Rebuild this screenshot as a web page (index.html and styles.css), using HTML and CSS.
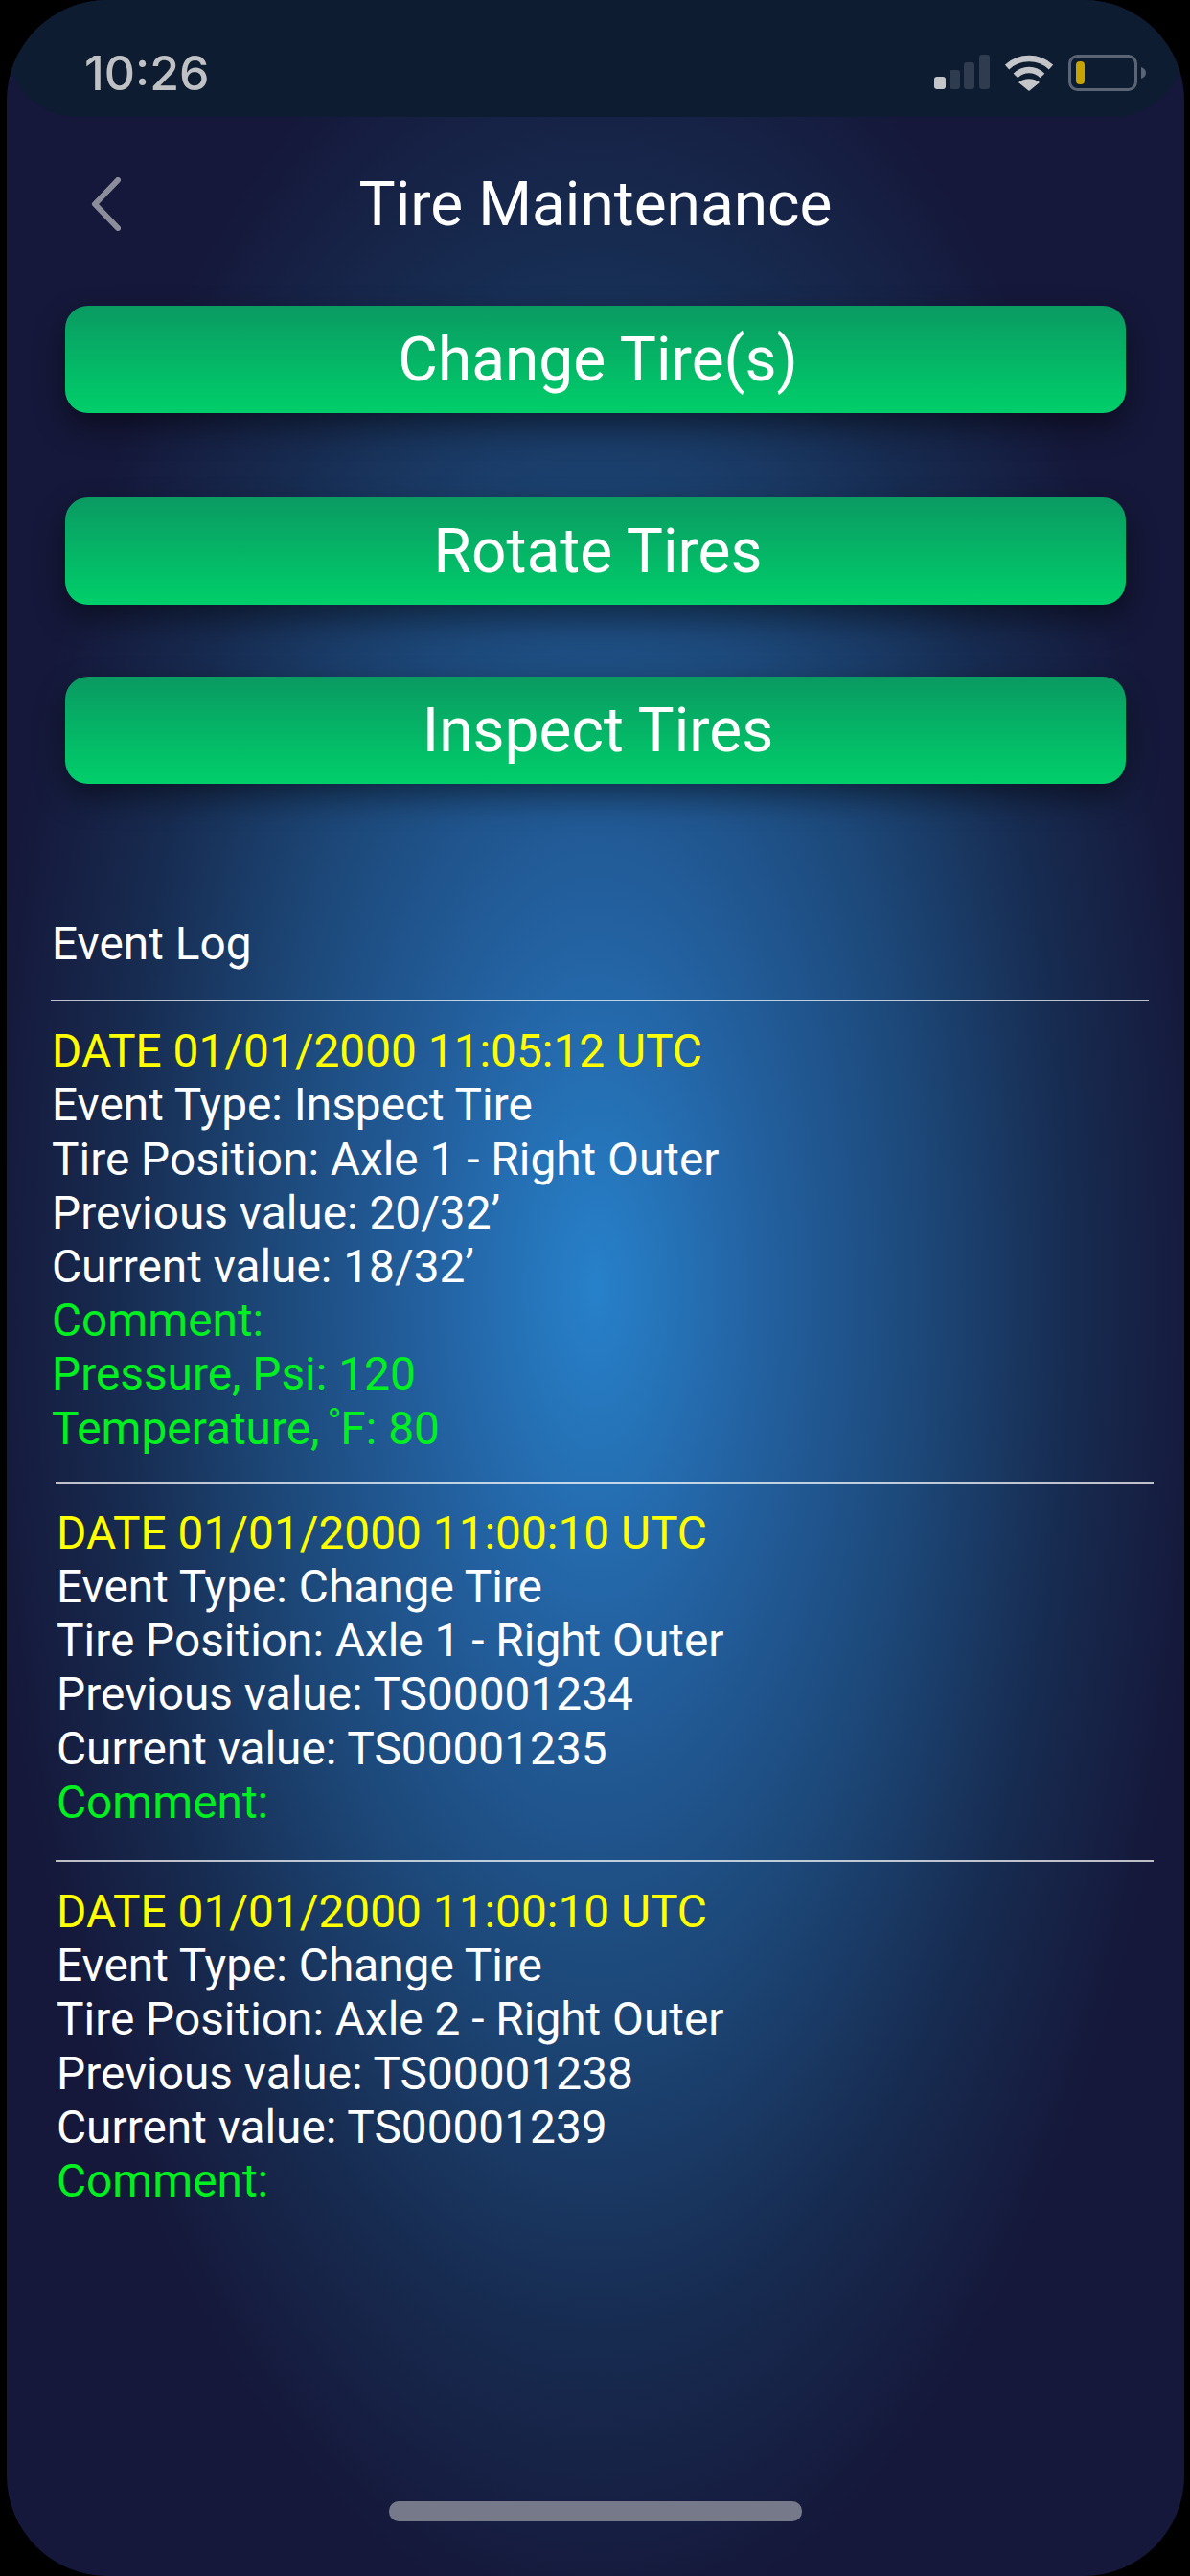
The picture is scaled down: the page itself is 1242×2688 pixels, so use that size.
FILE: index.html
```html
<!DOCTYPE html>
<html>
<head>
    <title>Tire Maintenance</title>
    <meta charset="UTF-8">
    <link rel="stylesheet" href="styles.css">
</head>
<body>
    <div class="phone">
        <!-- Status bar -->
        <div class="status-bar">
            <span class="status-time">10:26</span>
            <div class="status-icons">
                <svg width="58" height="36" viewBox="0 0 58 36">
                    <rect x="0" y="23" width="12" height="13" rx="3" fill="#c4c5c8"/>
                    <rect x="16" y="16" width="11" height="20" rx="3" fill="#2f3c50"/>
                    <rect x="31" y="8" width="11" height="28" rx="3" fill="#2f3c50"/>
                    <rect x="47" y="0" width="11" height="36" rx="3" fill="#2f3c50"/>
                </svg>
                <svg width="50" height="38" viewBox="0 0 50 38">
                    <path d="M2 13 C15 1 35 1 48 13" fill="none" stroke="#c4c5c8" stroke-width="6.5"/>
                    <path d="M11 22 C19 14 31 14 39 22" fill="none" stroke="#c4c5c8" stroke-width="6.5"/>
                    <path d="M25 38 L14 29 C20 24 30 24 36 29 Z" fill="#c4c5c8"/>
                </svg>
                <svg width="81" height="38" viewBox="0 0 81 38">
                    <rect x="1.5" y="1.5" width="69" height="35" rx="8" fill="none" stroke="#5a6474" stroke-width="3"/>
                    <rect x="8" y="7" width="9" height="24" rx="4" fill="#c8a402"/>
                    <path d="M76 13 C79 14 81 16 81 19 C81 22 79 24 76 25 Z" fill="#5a6474"/>
                </svg>
            </div>
        </div>

        <!-- Title -->
        <div class="top-nav">
            <svg class="back-icon" width="32" height="56" viewBox="0 0 32 56">
                <path d="M29 3 L5 28 L29 53" fill="none" stroke="#8b8d9b" stroke-width="6" stroke-linecap="round" stroke-linejoin="round"/>
            </svg>
            <h1 class="page-title">Tire Maintenance</h1>
        </div>

        <!-- Actions -->
        <div class="actions">
            <button class="action-button">Change Tire(s)</button>
            <button class="action-button">Rotate Tires</button>
            <button class="action-button">Inspect Tires</button>
        </div>

        <!-- Event log -->
        <div class="event-log">
            <div class="log-title">Event Log</div>
            <div class="log-entry">
                <div class="log-date">DATE 01/01/2000 11:05:12 UTC</div>
                <div>Event Type: Inspect Tire</div>
                <div>Tire Position: Axle 1 - Right Outer</div>
                <div>Previous value: 20/32’</div>
                <div>Current value: 18/32’</div>
                <div class="log-note">Comment:</div>
                <div class="log-note">Pressure, Psi: 120</div>
                <div class="log-note">Temperature, <span class="degree">˚</span>F: 80</div>
            </div>
            <div class="log-entry shifted">
                <div class="log-date">DATE 01/01/2000 11:00:10 UTC</div>
                <div>Event Type: Change Tire</div>
                <div>Tire Position: Axle 1 - Right Outer</div>
                <div>Previous value: TS00001234</div>
                <div>Current value: TS00001235</div>
                <div class="log-note">Comment:</div>
            </div>
            <div class="log-entry shifted">
                <div class="log-date">DATE 01/01/2000 11:00:10 UTC</div>
                <div>Event Type: Change Tire</div>
                <div>Tire Position: Axle 2 - Right Outer</div>
                <div>Previous value: TS00001238</div>
                <div>Current value: TS00001239</div>
                <div class="log-note">Comment:</div>
            </div>
        </div>

        <div class="home-bar"></div>
    </div>
</body>
</html>
```

FILE: styles.css
```css
html, body {
    margin: 0;
    padding: 0;
    background: #000;
}
body {
    width: 1242px;
    height: 2688px;
    overflow: hidden;
    font-family: Roboto, "Liberation Sans", sans-serif;
}
.phone {
    width: 1229px;
    height: 2688px;
    margin: 0 6px 0 7px;
    box-sizing: border-box;
    border-radius: 105px;
    overflow: hidden;
    display: flex;
    flex-direction: column;
    color: #fff;
    background: radial-gradient(ellipse 640px 1400px at 50% 50%, #2781ca 0%, #23609f 28%, #1c4676 55%, #172b50 78%, #15183a 100%);
}
.status-bar {
    height: 122px;
    flex: none;
    box-sizing: border-box;
    padding: 51px 40px 0 81px;
    display: flex;
    justify-content: space-between;
    align-items: flex-start;
    background: #0d1c30;
    border-radius: 0 0 75px 75px;
}
.status-time {
    font-family: Inter, sans-serif;
    font-size: 50px;
    font-weight: 500;
    line-height: 50px;
    color: #c0c1c4;
}
.status-icons {
    display: flex;
    align-items: flex-start;
    gap: 16px;
    padding-top: 6px;
}
.top-nav {
    height: 197px;
    flex: none;
    position: relative;
    display: flex;
    justify-content: center;
    align-items: center;
    padding-bottom: 14px;
    box-sizing: border-box;
}
.back-icon {
    position: absolute;
    left: 87px;
    top: 63px;
}
.page-title {
    margin: 0;
    font-size: 64px;
    font-weight: 400;
    line-height: 70px;
}
.actions {
    display: flex;
    flex-direction: column;
    padding: 0 61px;
    gap: 88px;
}
.action-button {
    display: block;
    width: 100%;
    height: 112px;
    border: none;
    border-radius: 24px;
    padding: 0 0 0 5px;
    font-family: inherit;
    font-size: 64px;
    color: #fff;
    background: linear-gradient(180deg, #0a9a62 0%, #00cf6a 100%);
    box-shadow: 0 14px 32px rgba(0, 0, 0, 0.45);
}
.action-button:last-child {
    margin-top: -13px;
}
.event-log {
    margin-top: 139px;
    font-size: 47.8px;
    line-height: 56.2px;
}
.log-title {
    padding-left: 47px;
    margin-bottom: 30px;
}
.log-entry {
    margin-left: 46px;
    width: 1146px;
    border-top: 2px solid rgba(255, 255, 255, 0.72);
    padding-top: 24px;
    padding-bottom: 27px;
}
.log-entry > div {
    padding-left: 1px;
}
.log-entry.shifted {
    margin-left: 51px;
    padding-bottom: 32px;
}
.log-date {
    color: #ffff00;
}
.log-note {
    color: #00f020;
}
.degree {
    margin-left: -4px;
    letter-spacing: -2px;
}
.home-bar {
    width: 431px;
    height: 21px;
    margin: auto auto 57px;
    border-radius: 10px;
    background: #767989;
}
```
